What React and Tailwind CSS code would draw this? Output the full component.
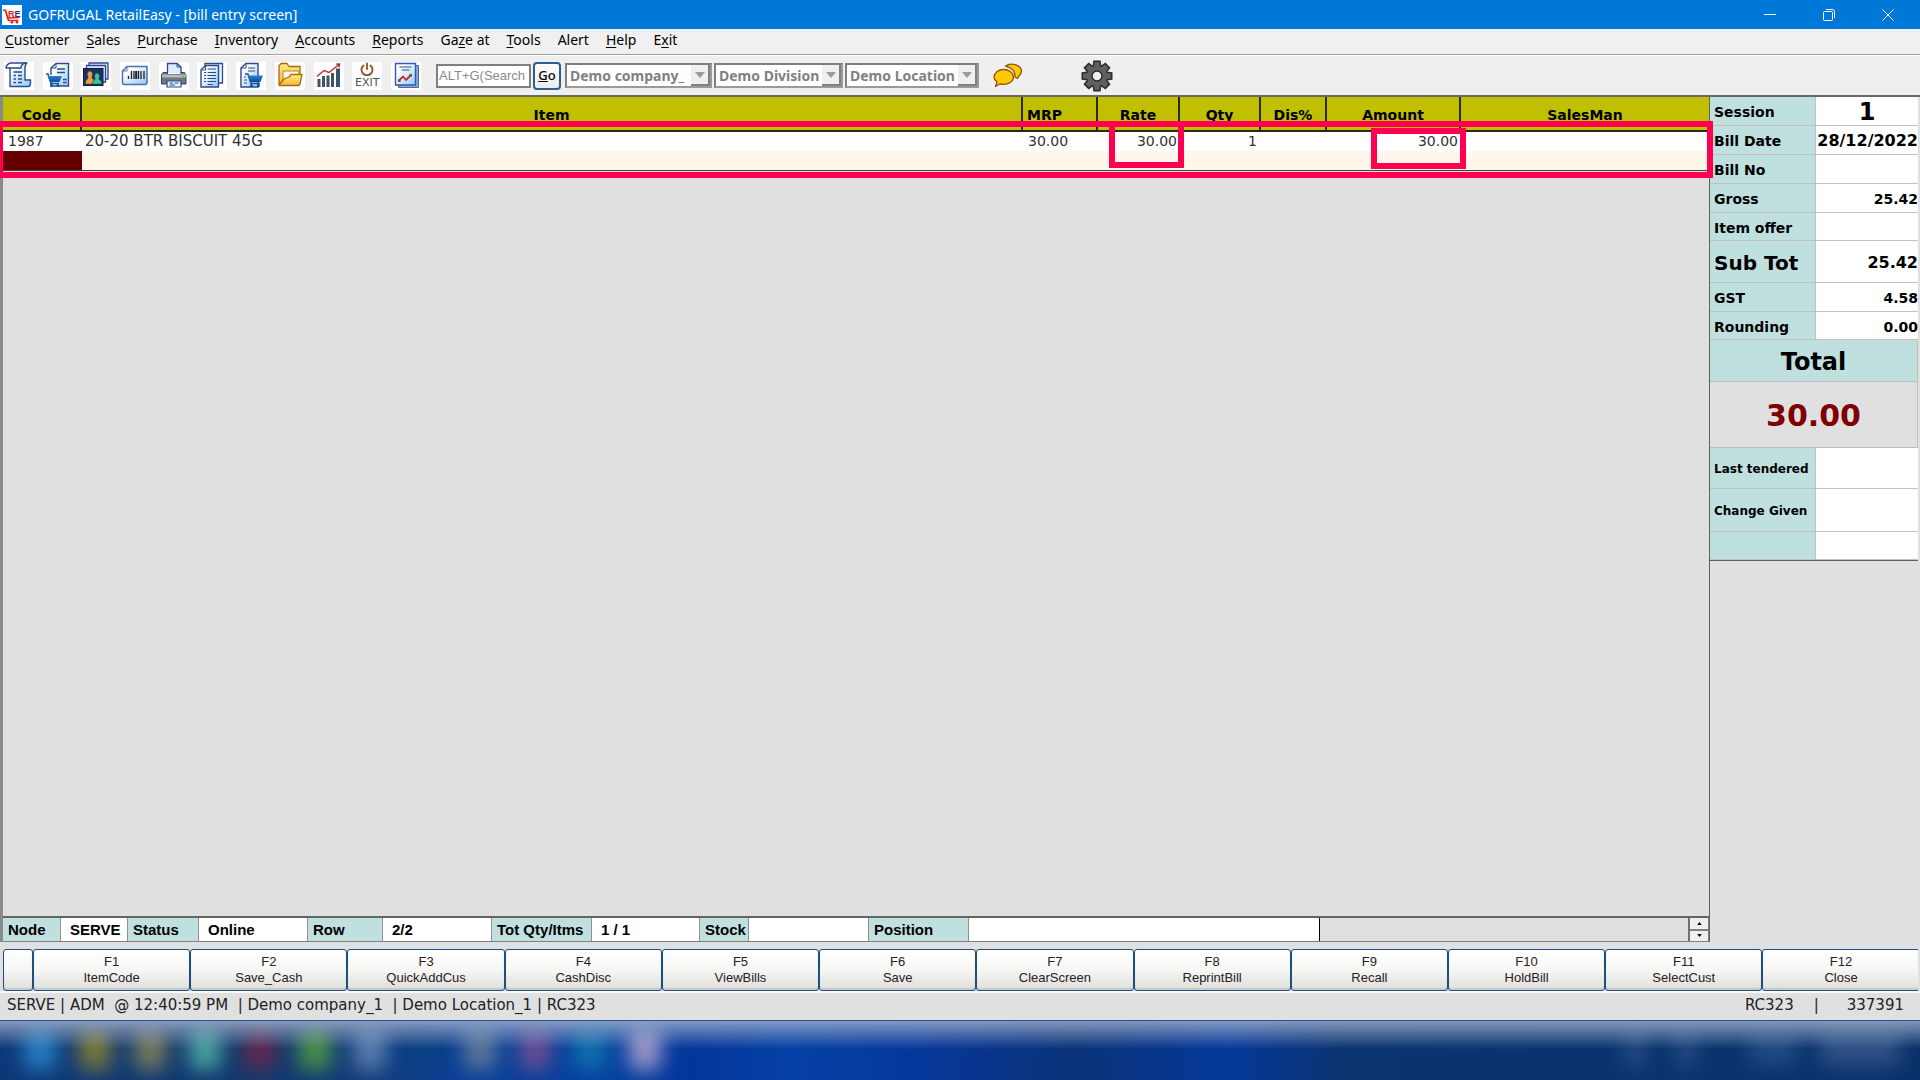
import React from "react";

const VERDANA = "font-['DejaVu_Sans',Verdana,sans-serif]";
const SEGOE = "font-['Noto_Sans',sans-serif]";
const ARIAL = "font-['Liberation_Sans',Arial,sans-serif]";

const INK = "#2f4a8a";

function SharedGradients() {
  return (
    <svg width="0" height="0" className="absolute" aria-hidden="true">
      <defs>
        <linearGradient id="paper" x1="0" y1="0" x2="1" y2="1">
          <stop offset="0.25" stopColor="#ffffff" />
          <stop offset="1" stopColor="#8cc8f8" />
        </linearGradient>
        <linearGradient id="cart" x1="0" y1="0" x2="0" y2="1">
          <stop offset="0" stopColor="#2f7fd0" />
          <stop offset="1" stopColor="#0f4a9a" />
        </linearGradient>
        <linearGradient id="folder" x1="0" y1="0" x2="0" y2="1">
          <stop offset="0" stopColor="#ffe98a" />
          <stop offset="1" stopColor="#f6b830" />
        </linearGradient>
      </defs>
    </svg>
  );
}

function Cart({ flip }) {
  return (
    <g transform={flip ? "translate(27 13) scale(-1 1)" : "translate(3 13)"}>
      {flip ? (
        <path d="M18 -2 H16 L13.500 8 H3" fill="none" stroke="#12509e" strokeWidth="1.400" transform="translate(17 0) scale(-1 1)" />
      ) : (
        <path d="M0 -1 H2 L5 8.500 H13" fill="none" stroke="#12509e" strokeWidth="1.400" />
      )}
      <path d="M1.500 1 H16 L13.500 7 H4 Z" fill="url(#cart)" />
      <circle cx="5.500" cy="10.500" r="1.500" fill="#12509e" />
      <circle cx="12" cy="10.500" r="1.500" fill="#12509e" />
    </g>
  );
}

const toolIcons = [
  {
    name: "Bill",
    art: (
      <g fill="url(#paper)" stroke={INK} strokeWidth="1.4" strokeLinejoin="round">
        <path d="M6 24.500 V6 H2 C2 4 4 1 7 1 H23 C21.500 2 21 4 21 6 V18 H26.500 V21 C26.500 23 25.500 24.500 24 24.500 Z" />
        <path d="M6 6 H17 C17 3.500 19 1 22 1" fill="none" />
        <path d="M9.500 10 H18 M9.500 13.500 H12 M14 13.500 H18 M9.500 17 H12 M14 17 H18 M9.500 20.500 H12 M14 20.500 H18" fill="none" />
      </g>
    ),
  },
  {
    name: "Sales bill",
    art: (
      <g>
        <path d="M8 13 V6 L13 1.500 H25.500 V24 H8 V20" fill="url(#paper)" stroke={INK} strokeWidth="1.400" />
        <path d="M8 6 H13 V1.500" fill="none" stroke={INK} />
        <path d="M14 7 H22 M14 10.500 H22 M20 17.500 H23.500 M20 20.500 H23.500" stroke={INK} strokeWidth="1.300" />
        <Cart />
      </g>
    ),
  },
  {
    name: "Customers",
    art: (
      <g>
        <path d="M8 1 H27 V17 H8 Z" fill="#dbe8ff" stroke={INK} strokeWidth="1.300" />
        <path d="M5.500 3.500 H24.500 V20 H5.500 Z" fill="#dbe8ff" stroke={INK} strokeWidth="1.300" />
        <rect x="2.500" y="6.500" width="19.500" height="17" fill="#1c2f66" stroke="#0e1c44" />
        <path d="M8.500 9 a3 3.400 0 0 1 2.500 5.500 v2 q3 .7 3 4 v1.500 H4.500 v-1.500 q0-3 2.500-4 v-2 A3 3.400 0 0 1 8.500 9Z" fill="#e8a050" stroke="#5a3210" strokeWidth=".6" />
        <path d="M16 11 a3 3.200 0 0 1 2 5 v1.500 q2.800 .8 2.800 3.500 v1 H11.500 v-1 q0-2.600 2.500-3.500 V16 A3 3.200 0 0 1 16 11Z" fill="#3fc0a0" stroke="#0c4a40" strokeWidth=".6" />
      </g>
    ),
  },
  {
    name: "Barcode",
    art: (
      <g>
        <path d="M2.500 9 L7 4.500 H27 V20.500 Q27 22.500 25 22.500 H4.500 Q2.500 22.500 2.500 20.500 Z" fill="url(#paper)" stroke="#4a72b0" strokeWidth="1.500" />
        <path d="M2.500 9 H7 V4.500" fill="none" stroke="#4a72b0" />
        <path d="M8.500 14 V17 M11.500 9 V17 M14 9 V17 M18.500 9 V17 M21 9 V17 M24 9 V17" stroke="#222" strokeWidth="1.300" />
        <path d="M16.200 9 V17" stroke="#222" strokeWidth="2" />
      </g>
    ),
  },
  {
    name: "Print",
    art: (
      <g>
        <path d="M8.500 11 V1.500 H18 L22 5 V11" fill="#dcecff" stroke={INK} strokeWidth="1.300" />
        <path d="M18 1.500 V5 H22" fill="none" stroke={INK} />
        <path d="M4 10.500 H8.500 V12.500 H22 V10.500 H25.500 L27 13 V22 H2.500 V13 Z" fill="#6f7780" stroke="#3c4654" />
        <rect x="3" y="12.500" width="24" height="3" fill="#b6bcc4" />
        <rect x="23" y="13.500" width="3" height="2" fill="#4cd050" />
        <path d="M8 19 H22 V25 H8 Z" fill="#eaf6ff" stroke={INK} strokeWidth="1.200" />
        <path d="M10.500 21 H14 M15.500 21 H19.500 M10.500 23 H16" stroke={INK} />
      </g>
    ),
  },
  {
    name: "Report list",
    art: (
      <g>
        <path d="M8 1.500 H25.500 V21 H8 Z" fill="#e6f2ff" stroke={INK} strokeWidth="1.300" />
        <path d="M4 8 L8.500 3.500 H21.500 V25 H4 Z" fill="url(#paper)" stroke={INK} strokeWidth="1.400" />
        <path d="M4 8 H8.500 V3.500" fill="none" stroke={INK} />
        <path d="M10.500 7 H19 M7 10.500 H9 M10.500 10.500 H19 M7 13.500 H9 M10.500 13.500 H19 M7 16.500 H9 M10.500 16.500 H19 M7 19.500 H9 M10.500 19.500 H19 M10.500 22.500 H16" stroke={INK} strokeWidth="1.200" />
      </g>
    ),
  },
  {
    name: "Purchase bill",
    art: (
      <g>
        <path d="M5 6 L10 1.500 H22 V25 H5 Z" fill="url(#paper)" stroke={INK} strokeWidth="1.400" />
        <path d="M5 6 H10 V1.500" fill="none" stroke={INK} />
        <path d="M12 6 H19 M12 9 H19 M8 15 H10 M8 18 H11 M8 21 H11" stroke={INK} strokeWidth="1.200" />
        <path d="M9 12 H12 L15 21.500 H24" fill="none" stroke="#12509e" strokeWidth="1.400" />
        <path d="M11.500 13.500 H27 L24.500 20 H14 Z" fill="url(#cart)" />
        <circle cx="15.500" cy="23.500" r="1.500" fill="#12509e" />
        <circle cx="22.500" cy="23.500" r="1.500" fill="#12509e" />
      </g>
    ),
  },
  {
    name: "Open",
    art: (
      <g stroke="#a86a10" strokeWidth="1.300" strokeLinejoin="round">
        <path d="M4 22 V4 L6 1.500 H12 L14 4.500 H25 V22 Z" fill="url(#folder)" />
        <path d="M8 9 H24 V18 H8 Z" fill="#fff8e0" strokeWidth=".8" />
        <path d="M4 23 L9 17 L14 15 L16 12.500 H27 L25 21.500 L24 23.500 H4.500 Z" fill="url(#folder)" />
      </g>
    ),
  },
  {
    name: "Statistics",
    art: (
      <g>
        <path d="M3.500 17 h3 v8 h-3z M8 14 h3 v11 h-3z M12.500 13.500 h3 v11.500 h-3z M17 11 h3 v14 h-3z M22 6.500 h4 v18.500 h-4z" fill="#3f5468" />
        <path d="M3 14.500 L10 8.500 L15 10.500 L25 2.500" fill="none" stroke="#c0303a" strokeWidth="1.500" />
        <path d="M21.500 1.500 L26.500 1.200 L25.500 6 Z" fill="#c0303a" />
      </g>
    ),
  },
  {
    name: "Exit",
    exit: true,
    art: (
      <g fill="none" stroke="#9a5428" strokeWidth="1.900" strokeLinecap="round">
        <path d="M11.500 3.500 A5.500 5.500 0 1 0 18.500 3.500" />
        <path d="M15 1.500 V7" />
      </g>
    ),
  },
  {
    name: "Chart report",
    art: (
      <g>
        <path d="M7.500 3.500 H27.500 V25.500 H7.500 Z" fill="#8fa6d8" stroke="#4a64a8" />
        <path d="M4.500 1.500 H24.500 V23 H4.500 Z" fill="url(#paper)" stroke="#2f5ab0" strokeWidth="1.400" />
        <path d="M8.500 5 H20.500 M10.500 8 H18.500" stroke="#6d86ad" strokeWidth="1.300" />
        <path d="M8 18.500 L12 14.500 L15 18 L20 13" fill="none" stroke="#b8302c" strokeWidth="1.800" />
        <path d="M7 17.500 h2.500v2.500h-2.500z M18.500 12 h2.500v2.500h-2.500z" fill="#b8302c" />
      </g>
    ),
  },
];

function ToolButton({ icon }) {
  return (
    <button aria-label={icon.name} className="flex h-7 w-[30px] flex-col items-center bg-white">
      {icon.exit ? (
        <>
          <svg viewBox="7 0 16 14" className="h-[14px] w-4 shrink-0">{icon.art}</svg>
          <span className="text-[11px] leading-[14px] text-[#3f5468] font-['DejaVu_Sans',Verdana,sans-serif]">EXIT</span>
        </>
      ) : (
        <svg viewBox="0 0 30 28" className="h-7 w-[30px]">{icon.art}</svg>
      )}
    </button>
  );
}

function MenuItem({ text, hot }) {
  return (
    <button className="leading-[22px]">
      {hot < 0 ? text : (
        <>
          {text.slice(0, hot)}
          <u className="underline-offset-2">{text[hot]}</u>
          {text.slice(hot + 1)}
        </>
      )}
    </button>
  );
}

const menu = [
  ["Customer", 0], ["Sales", 0], ["Purchase", 0], ["Inventory", 0], ["Accounts", 0],
  ["Reports", 0], ["Gaze at", 2], ["Tools", 0], ["Alert", -1], ["Help", 0], ["Exit", 1],
];

function Combo({ label, value, width }) {
  return (
    <div className={`flex h-[25px] border-2 border-t-[#808080] border-l-[#808080] border-r-[#9a9a9a] border-b-[#9a9a9a] bg-white ${width}`}>
      <select
        disabled
        aria-label={label}
        className="min-w-0 flex-1 appearance-none bg-white pl-[3px] text-[14px] leading-5 font-bold text-[#808080] opacity-100 font-['Noto_Sans',sans-serif]"
      >
        <option>{value}</option>
      </select>
      <span className="flex w-[19px] items-center justify-center border-r-2 border-b-2 border-r-[#808080] border-b-[#808080] bg-[#efefef]">
        <svg viewBox="0 0 10 6" className="h-[6px] w-[10px]"><path d="M0 0H10L5 6Z" fill="#9a9a9a" /></svg>
      </span>
    </div>
  );
}

function Logo() {
  return (
    <span className="block size-5 bg-white">
      <svg viewBox="0 0 20 20" className="size-5">
        <path d="M1 5 L3.500 5.500 L6.500 15.500 H16.500" fill="none" stroke="#e02020" strokeWidth="1.700" />
        <path d="M5.500 13 L17.500 12.500" stroke="#e02020" strokeWidth="1.600" />
        <circle cx="10" cy="17.300" r="1.300" fill="#e02020" />
        <circle cx="15" cy="17.300" r="1.300" fill="#e02020" />
        <text x="6" y="11.500" fontFamily="Liberation Sans, Arial, sans-serif" fontWeight="700" fontSize="9" fill="#e02020">R<tspan fill="#1c2f9a">E</tspan></text>
      </svg>
    </span>
  );
}

const gearTeeth = [0, 45, 90, 135, 180, 225, 270, 315];

function Gear() {
  return (
    <svg viewBox="-16 -16 32 32" className="size-8">
      <g fill="#606060" stroke="#2c2c2c" strokeWidth="2">
        {gearTeeth.map((a) => (
          <path key={a} transform={`rotate(${a})`} d="M-3.500 -9 L-2.800 -14.500 H2.800 L3.500 -9 Z" />
        ))}
      </g>
      <circle r="10.500" fill="#606060" stroke="#2c2c2c" />
      <g fill="#606060">
        {gearTeeth.map((a) => (
          <path key={a} transform={`rotate(${a})`} d="M-3 -8 L-2.400 -13.800 H2.400 L3 -8 Z" />
        ))}
      </g>
      <circle r="5" fill="#efefef" stroke="#2c2c2c" strokeWidth="1.500" />
    </svg>
  );
}

function Bubbles() {
  return (
    <svg viewBox="0 0 30 25" className="h-[25px] w-[30px]">
      <path d="M12.500 3 C17 -.5 28 1 28.500 8 C28.500 10.500 27 12 26 13 L24.500 15.500 L22 14 C22.500 9 19 4.500 12.500 3Z" fill="#ffc800" stroke="#96520c" strokeWidth="1.300" strokeLinejoin="round" />
      <path d="M10.500 6.500 C16 6.500 20.500 9.800 20.500 14 C20.500 18.200 16 21.300 10.500 21.300 C9 21.300 8 21.200 7 20.800 L2.500 23.500 L4 19 C2 17.500 1 16 1 14 C1 9.800 5.500 6.500 10.500 6.500Z" fill="#ffc800" stroke="#96520c" strokeWidth="1.300" strokeLinejoin="round" />
    </svg>
  );
}

const headCell = "border-r-2 border-b-2 border-[#2a2a10] pt-[2px] text-[14px] leading-5 font-bold";

function BillGrid() {
  return (
    <table className="w-full table-fixed border-separate border-spacing-0 text-[14px] text-[#333]">
      <colgroup>
        <col className="w-[79px]" />
        <col />
        <col className="w-[75px]" />
        <col className="w-[82px]" />
        <col className="w-[81px]" />
        <col className="w-[66px]" />
        <col className="w-[134px]" />
        <col className="w-[248px]" />
      </colgroup>
      <thead>
        <tr className="h-[35px] bg-[#c0c000] text-black">
          <th className={headCell}>Code</th>
          <th className={headCell}>Item</th>
          <th className={`${headCell} pl-1 text-left`}>MRP</th>
          <th className={headCell}>Rate</th>
          <th className={headCell}>Qty</th>
          <th className={headCell}>Dis%</th>
          <th className={headCell}>Amount</th>
          <th className="border-b-2 border-[#2a2a10] pt-[2px] text-[14px] leading-5 font-bold">SalesMan</th>
        </tr>
      </thead>
      <tbody>
        <tr className="h-[19px] bg-white leading-[19px]">
          <td className="pl-[5px]">1987</td>
          <td className="pl-[3px] text-[15px]">20-20 BTR BISCUIT 45G</td>
          <td className="pl-[5px]">30.00</td>
          <td className="pr-[3px] text-right">30.00</td>
          <td className="pr-1 text-right">1</td>
          <td />
          <td className="pr-[3px] text-right">30.00</td>
          <td />
        </tr>
        <tr className="h-[20px] bg-[#fff8ea]">
          <td className="border-b border-[#404040] bg-[#640000]" />
          <td className="border-b border-[#404040]" colSpan={7} />
        </tr>
      </tbody>
    </table>
  );
}

const sideLabel = "border-r border-b border-[#c0c0c0] bg-[#c0e0e0] pt-[2px] pl-1 text-left align-middle whitespace-nowrap";
const sideValue = "border-b border-[#c0c0c0] bg-white pt-[2px] align-middle";

const sideRows = [
  { label: "Session", value: "1", h: "h-[29px]", vs: "text-[24px] leading-6 text-center" },
  { label: "Bill Date", value: "28/12/2022", h: "h-[29px]", vs: "text-[16px] text-right" },
  { label: "Bill No", value: "", h: "h-[29px]" },
  { label: "Gross", value: "25.42", h: "h-[29px]" },
  { label: "Item offer", value: "", h: "h-[28px]" },
  { label: "Sub Tot", value: "25.42", h: "h-[42px]", ls: "text-[20px]", vs: "text-[16px] text-right" },
  { label: "GST", value: "4.58", h: "h-[29px]" },
  { label: "Rounding", value: "0.00", h: "h-[28px]" },
];

const tenderRows = [
  { label: "Last tendered", h: "h-[41px]" },
  { label: "Change Given", h: "h-[43px]" },
  { label: "", h: "h-[28px]" },
];

function Summary() {
  return (
    <table className="w-full table-fixed border-separate border-spacing-0 border-b border-[#606060] text-[14px] leading-5 font-bold text-black">
      <colgroup>
        <col className="w-[106px]" />
        <col />
      </colgroup>
      <tbody>
        {sideRows.map((r) => (
          <tr key={r.label} className={r.h}>
            <th className={`${sideLabel} ${r.ls || ""}`}>{r.label}</th>
            <td className={`${sideValue} ${r.vs || "text-right"}`}>{r.value}</td>
          </tr>
        ))}
        <tr className="h-[42px]">
          <th colSpan={2} className="border-r border-b border-[#c0c0c0] bg-[#c0e0e0] pt-[2px] text-[24px]">Total</th>
        </tr>
        <tr className="h-[66px]">
          <td colSpan={2} className="border-r border-b border-[#c0c0c0] pt-[2px] text-center text-[30px] text-[#800000]">30.00</td>
        </tr>
        {tenderRows.map((r) => (
          <tr key={r.label} className={r.h}>
            <th className={`${sideLabel} text-[12px]`}>{r.label}</th>
            <td className={sideValue} />
          </tr>
        ))}
      </tbody>
    </table>
  );
}

const statusCells = [
  ["Node", "w-[58px]", "SERVE", "w-[67px] pl-[9px] border-[#909090]"],
  ["Status", "w-[71px]", "Online", "w-[109px] pl-[9px] border-[#909090]"],
  ["Row", "w-[75px]", "2/2", "w-[109px] pl-[9px] border-[#909090]"],
  ["Tot Qty/Itms", "w-[100px]", "1 / 1", "w-[108px] pl-[9px] border-[#909090]"],
  ["Stock", "w-[49px]", "", "w-[120px] border-[#909090]"],
  ["Position", "w-[100px]", "", "w-[351px] border-black"],
];

function InfoBar() {
  return (
    <div className={`flex h-[26px] border-t-2 border-b border-t-[#606860] border-b-[#808080] text-[15px] leading-6 font-bold text-black ${ARIAL}`}>
      {statusCells.map(([label, lw, value, vw]) => (
        <React.Fragment key={label}>
          <span className={`shrink-0 border-r border-[#909090] bg-[#c0e0e0] pl-[5px] ${lw}`}>{label}</span>
          <span className={`shrink-0 border-r bg-white ${vw}`}>{value}</span>
        </React.Fragment>
      ))}
      <span className="flex-1 border-r-2 border-[#707070]" />
      <span className="flex w-[19px] flex-col gap-[2px] bg-[#808080] pr-px">
        <button aria-label="Up" className="flex flex-1 items-center justify-center bg-[#efefef]">
          <svg viewBox="0 0 6 4" className="h-[3px] w-[5px]"><path d="M0 4H6L3 0Z" fill="#000" /></svg>
        </button>
        <button aria-label="Down" className="flex flex-1 items-center justify-center bg-[#efefef]">
          <svg viewBox="0 0 6 4" className="h-[3px] w-[5px]"><path d="M0 0H6L3 4Z" fill="#000" /></svg>
        </button>
      </span>
    </div>
  );
}

const keys = ["ItemCode", "Save_Cash", "QuickAddCus", "CashDisc", "ViewBills", "Save", "ClearScreen", "ReprintBill", "Recall", "HoldBill", "SelectCust", "Close"];
const keyFace = "h-full shrink-0 rounded-[3px] border border-[#1f4f80] bg-gradient-to-b from-white via-[#f6f6f4] to-[#dededa] shadow-[inset_0_-2px_1px_#c9c9c6]";

const blobs = [
  "bg-[#2a8bd0]", "bg-[#8e8530]", "bg-[#8a8658]", "bg-[#55b5a8]", "bg-[#70264a]", "bg-[#55a040]",
  "bg-[#6688b8]", "bg-[#084080]", "bg-[#6a7f98]", "bg-[#7a5090]", "bg-[#1478b0]", "bg-[#b8a8d0]",
];

function Taskbar() {
  return (
    <div className="relative h-[60px] shrink-0 overflow-hidden border-t border-[#2a5090] bg-[linear-gradient(to_right,#0d3878_0%,#10386c_12%,#123c78_19%,#0a3f96_24%,#0340a0_32%,#05359a_36%,#0440a5_41%,#06379a_48%,#0b3378_56%,#04389a_64%,#0c3470_70%,#0a346e_88%,#0a3068_100%)]">
      <div className="flex h-[54px] items-center gap-[23px] pl-6 opacity-85 blur-[10px]">
        {blobs.map((b) => (
          <span key={b} className={`h-11 w-8 shrink-0 rounded-lg ${b}`} />
        ))}
        <span className="flex-1" />
        <span className="mr-3 h-9 w-4 bg-[#35588c]" />
        <span className="mr-8 h-9 w-4 bg-[#35588c]" />
        <span className="h-8 w-12 bg-[#28508a]" />
        <span className="mr-5 h-9 w-20 bg-[#35588c]" />
      </div>
      <div className="absolute inset-x-0 top-0 h-7 bg-gradient-to-b from-[#a0b0cc]/80 to-transparent" />
    </div>
  );
}

export default function App() {
  return (
    <div className={`flex min-h-screen flex-col overflow-hidden bg-[#e0e0e0] text-black ${SEGOE}`}>
      <SharedGradients />
      <header className="flex h-[29px] shrink-0 items-center bg-[#0078d7] pl-[2px] text-white">
        <Logo />
        <h1 className="flex-1 pl-[6px] text-[14px] leading-6">GOFRUGAL RetailEasy - [bill entry screen]</h1>
        <div className="flex items-center gap-[47px] pr-[26px]">
          <button aria-label="Minimize"><svg viewBox="0 0 12 12" className="size-3" fill="none" stroke="currentColor"><path d="M0 5.500H12" /></svg></button>
          <button aria-label="Restore"><svg viewBox="0 0 12 12" className="size-3" fill="none" stroke="currentColor"><rect x=".5" y="2.500" width="9" height="9" rx="1" /><path d="M3 .5H9.500Q11.500.5 11.500 2.500V9" /></svg></button>
          <button aria-label="Close"><svg viewBox="0 0 12 12" className="size-3" fill="none" stroke="currentColor"><path d="M.5.5L11.500 11.500M11.500.5L.5 11.500" /></svg></button>
        </div>
      </header>

      <nav className="flex h-[26px] shrink-0 items-start gap-[17px] border-b border-[#a0a0a0] bg-[#f0f0f0] pl-[5px] text-[14px]">
        {menu.map(([text, hot]) => <MenuItem key={text} text={text} hot={hot} />)}
      </nav>

      <div className="flex h-10 shrink-0 items-center border-t border-white bg-[#efefef] pl-1">
        <div className="flex w-[417px] justify-between">
          {toolIcons.map((icon) => <ToolButton key={icon.name} icon={icon} />)}
        </div>
        <input
          aria-label="Search"
          placeholder="ALT+G(Search"
          className="ml-[15px] h-6 w-[95px] border-2 border-[#808080] bg-white pl-px text-[13px] placeholder:text-[#8a8a8a] font-['Liberation_Sans',Arial,sans-serif]"
        />
        <button className="ml-[2px] h-7 w-[28px] rounded-[4px] border-2 border-[#2c5f92] bg-gradient-to-b from-white to-[#ececea] text-[13px] font-medium"><u>G</u>o</button>
        <div className="ml-1 flex gap-[2px]">
          <Combo label="Company" value="Demo company_" width="w-[147px]" />
          <Combo label="Division" value="Demo Division" width="w-[129px]" />
          <Combo label="Location" value="Demo Location" width="w-[134px]" />
        </div>
        <button aria-label="Messages" className="ml-[14px]"><Bubbles /></button>
        <button aria-label="Settings" className="ml-[58px]"><Gear /></button>
      </div>

      <main className={`flex flex-1 border-t-2 border-[#686868] pr-[2px] ${VERDANA}`}>
        <section className="relative flex min-w-0 flex-1 flex-col border-r border-l-[3px] border-r-[#606060] border-l-[#8a8a8a]">
          <BillGrid />
          <div className="flex-1" />
          <InfoBar />
          <div className="absolute top-6 -right-1 -left-[6px] h-[57px] border-[6px] border-[#ff0050]" />
          <div className="absolute top-6 right-[525px] h-[47px] w-[75px] border-[6px] border-[#ff0050]" />
          <div className="absolute top-[31px] right-[243px] h-[41px] w-[95px] border-[6px] border-[#ff0050]" />
        </section>
        <aside className="w-[208px] shrink-0">
          <Summary />
        </aside>
      </main>

      <div className={`mt-[7px] mr-[2px] ml-[3px] flex h-[42px] shrink-0 overflow-hidden text-[13px] leading-4 text-[#2a2024] ${ARIAL}`}>
        <button aria-label="Previous keys" className={`w-[30px] ${keyFace}`} />
        {keys.map((name, i) => (
          <button key={name} className={`w-[8.21%] ${keyFace}`}>
            F{i + 1}
            <br />
            {name}
          </button>
        ))}
      </div>

      <footer className={`flex h-[29px] shrink-0 items-start justify-between border-t-2 border-[#f8f8f8] pr-[16px] pl-[7px] text-[15px] leading-6 text-[#222] ${VERDANA}`}>
        <span className="whitespace-pre">SERVE | ADM  @ 12:40:59 PM  | Demo company_1  | Demo Location_1 | RC323</span>
        <span className="flex gap-5"><span>RC323</span><span>|</span><span className="pl-2">337391</span></span>
      </footer>

      <Taskbar />
    </div>
  );
}
